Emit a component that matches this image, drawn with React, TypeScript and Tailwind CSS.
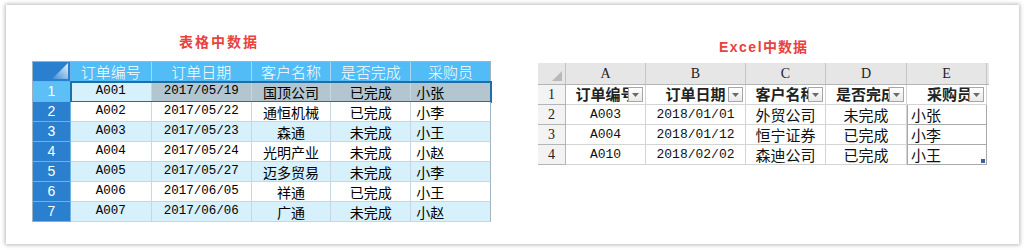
import React from 'react';

const cjk = "font-['Noto_Sans_CJK_SC',sans-serif]";
const mono = "font-['Liberation_Mono','Noto_Sans_CJK_SC',monospace]";
const serif = "font-['Liberation_Serif','Noto_Sans_CJK_SC',serif]";

const leftHead = ['订单编号', '订单日期', '客户名称', '是否完成', '采购员'];
const leftWidths = ['w-[81px]', 'w-[100px]', 'w-[80px]', 'w-[80px]', 'w-[80px]'];
const leftRows = [
  ['A001', '2017/05/19', '国顶公司', '已完成', '小张'],
  ['A002', '2017/05/22', '通恒机械', '已完成', '小李'],
  ['A003', '2017/05/23', '森通', '未完成', '小王'],
  ['A004', '2017/05/24', '光明产业', '未完成', '小赵'],
  ['A005', '2017/05/27', '迈多贸易', '未完成', '小李'],
  ['A006', '2017/06/05', '祥通', '已完成', '小王'],
  ['A007', '2017/06/06', '广通', '未完成', '小赵'],
];

const xlLetters = ['A', 'B', 'C', 'D', 'E'];
const xlWidths = ['w-[80px]', 'w-[100px]', 'w-[80px]', 'w-[81px]', 'w-[80px]'];
const xlRows = [
  ['A003', '2018/01/01', '外贸公司', '未完成', '小张'],
  ['A004', '2018/01/12', '恒宁证券', '已完成', '小李'],
  ['A010', '2018/02/02', '森迪公司', '已完成', '小王'],
];

const Corner = () => (
  <svg width="16" height="16" viewBox="0 0 16 16" className="absolute right-[2px] bottom-[2px]">
    <defs>
      <linearGradient id="cg" x1="0" y1="1" x2="1" y2="0">
        <stop offset="0" stopColor="#3a8ad6" />
        <stop offset="1" stopColor="#e8f4fc" />
      </linearGradient>
    </defs>
    <polygon points="16,0 16,16 0,16" fill="url(#cg)" />
  </svg>
);

const LeftTable = () => (
  <div className="flex flex-col w-[459px] border-l border-t border-[#9fb3c2]">
    {/* header */}
    <div className="flex h-[20px]">
      <div className="relative w-[38px] h-[20px] bg-[#2a80cf] border-r border-b border-[#6fb3e5]">
        <Corner />
      </div>
      {leftHead.map((h, i) => (
        <div
          key={h}
          className={`${leftWidths[i]} h-[20px] bg-[#52bcf6] border-r border-b border-[#a9d8f2] last:border-r-[#a2b4c0] flex items-center justify-center text-white text-[15px] font-light leading-none ${cjk}`}
        >
          {h}
        </div>
      ))}
    </div>
    {leftRows.map((r, ri) => {
      const sel = ri === 0;
      const odd = ri % 2 === 0;
      return (
        <div key={r[0]} className="relative flex h-[20px]">
          <div
            className={`w-[38px] h-[20px] border-r border-b border-[#6fb3e5] flex items-center justify-center text-white text-[14px] font-['Liberation_Sans',sans-serif] ${sel ? 'bg-[#5cbff6]' : 'bg-[#2a80cf]'}`}
          >
            {ri + 1}
          </div>
          {r.map((c, ci) => {
            const bg = sel ? (ci === 0 ? 'bg-[#d6f0fc]' : 'bg-[#b3c6cf]') : odd ? 'bg-[#d6f0fc]' : 'bg-white';
            const latin = ci < 2;
            return (
              <div
                key={ci}
                className={`${leftWidths[ci]} h-[20px] border-r border-b border-[#c9d6de] flex items-center overflow-hidden whitespace-nowrap text-black ${bg} ${ci === 4 ? 'justify-start pl-[5px]' : 'justify-center'} ${latin ? `${mono} text-[12.5px]` : `${cjk} text-[14px]`} leading-none ${ci === 4 ? 'border-r-[#a2b4c0]' : ''}`}
              >
                {c}
              </div>
            );
          })}
          {sel && (
            <div className="absolute left-[37px] right-[-1px] top-[-1px] bottom-[-1px] border-2 border-[#1f6ea8] pointer-events-none" />
          )}
        </div>
      );
    })}
  </div>
);

const DropBtn = () => (
  <div className="absolute right-[2px] top-[2px] w-[15px] h-[15px] border border-[#a6a6a6] bg-gradient-to-b from-white to-[#e9e9e9] flex items-center justify-center">
    <svg width="7" height="4" viewBox="0 0 7 4">
      <polygon points="0,0 7,0 3.5,4" fill="#6b6b6b" />
    </svg>
  </div>
);

const ExcelTable = () => (
  <div className="flex flex-col">
    {/* column letters */}
    <div className="flex h-[22px] bg-[#e6e6e6] w-[451px] border-b border-[#b5b5b5]">
      <div className="relative w-[28px] h-full border-r border-[#c2c2c2]">
        <svg width="10" height="10" viewBox="0 0 10 10" className="absolute right-[3px] bottom-[3px]">
          <polygon points="10,0 10,10 0,10" fill="#b9b9b9" />
        </svg>
      </div>
      {xlLetters.map((l, i) => (
        <div
          key={l}
          className={`${xlWidths[i]} h-full border-r border-[#c6c6c6] flex items-center justify-center text-[14px] text-[#222] ${serif}`}
        >
          {l}
        </div>
      ))}
    </div>
    {/* header row */}
    <div className="flex h-[20px]">
      <div className={`w-[28px] h-full bg-[#f3f3f3] border-r border-b border-[#b5b5b5] flex items-center justify-center text-[14px] text-[#222] ${serif}`}>1</div>
      {['订单编号', '订单日期', '客户名称', '是否完成', '采购员'].map((h, i) => (
        <div
          key={h}
          className={`relative ${xlWidths[i]} h-full border-r border-b border-[#d4d4d4] overflow-hidden flex items-center justify-center whitespace-nowrap font-bold text-[15px] text-[#222] ${cjk}`}
        >
          <span className={i === 4 ? 'pl-[6px]' : ''}>{h}</span>
          <DropBtn />
        </div>
      ))}
    </div>
    {xlRows.map((r, ri) => (
      <div key={r[0]} className="flex h-[20px]">
        <div className={`w-[28px] h-full bg-[#f3f3f3] border-r border-b border-[#b5b5b5] flex items-center justify-center text-[14px] text-[#222] ${serif}`}>
          {ri + 2}
        </div>
        {r.map((c, ci) => (
          <div
            key={ci}
            className={`relative ${xlWidths[ci]} h-full border-b flex items-center whitespace-nowrap overflow-hidden text-[#111] leading-none ${ci === 4 ? 'justify-start pl-[3px] border-x border-[#a9a9a9]' : 'justify-center border-r border-[#d4d4d4]'} ${ci < 2 ? `${mono} text-[13px]` : `${cjk} text-[15px]`}`}
          >
            {c}
            {ci === 4 && ri === 2 && (
              <div className="absolute right-[1px] bottom-[1px] w-[4px] h-[4px] bg-[#3e5f9e]" />
            )}
          </div>
        ))}
      </div>
    ))}
  </div>
);

export default function App() {
  return (
    <div className="w-[1024px] h-[250px] bg-white pt-[5px] pl-[6px]">
      <div className="w-[1013px] h-[239px] bg-white shadow-[0_0_4px_1px_rgba(0,0,0,0.28)] flex items-start">
        <div className="flex flex-col items-start pt-[26px] pl-[26px]">
          <div className={`ml-[147px] h-[20px] leading-[20px] text-[14px] font-bold tracking-[2px] text-[#e8413f] ${cjk}`}>表格中数据</div>
          <div className="mt-[10px]">
            <LeftTable />
          </div>
        </div>
        <div className="flex flex-col items-center pt-[31px] pl-[47px]">
          <div className={`h-[20px] leading-[20px] text-[14px] font-bold tracking-[1px] text-[#e8413f] ${cjk}`}>
            <span className="font-['Liberation_Sans',sans-serif] tracking-[1.5px]">Excel</span>中数据
          </div>
          <div className="mt-[7px] self-start">
            <ExcelTable />
          </div>
        </div>
      </div>
    </div>
  );
}
